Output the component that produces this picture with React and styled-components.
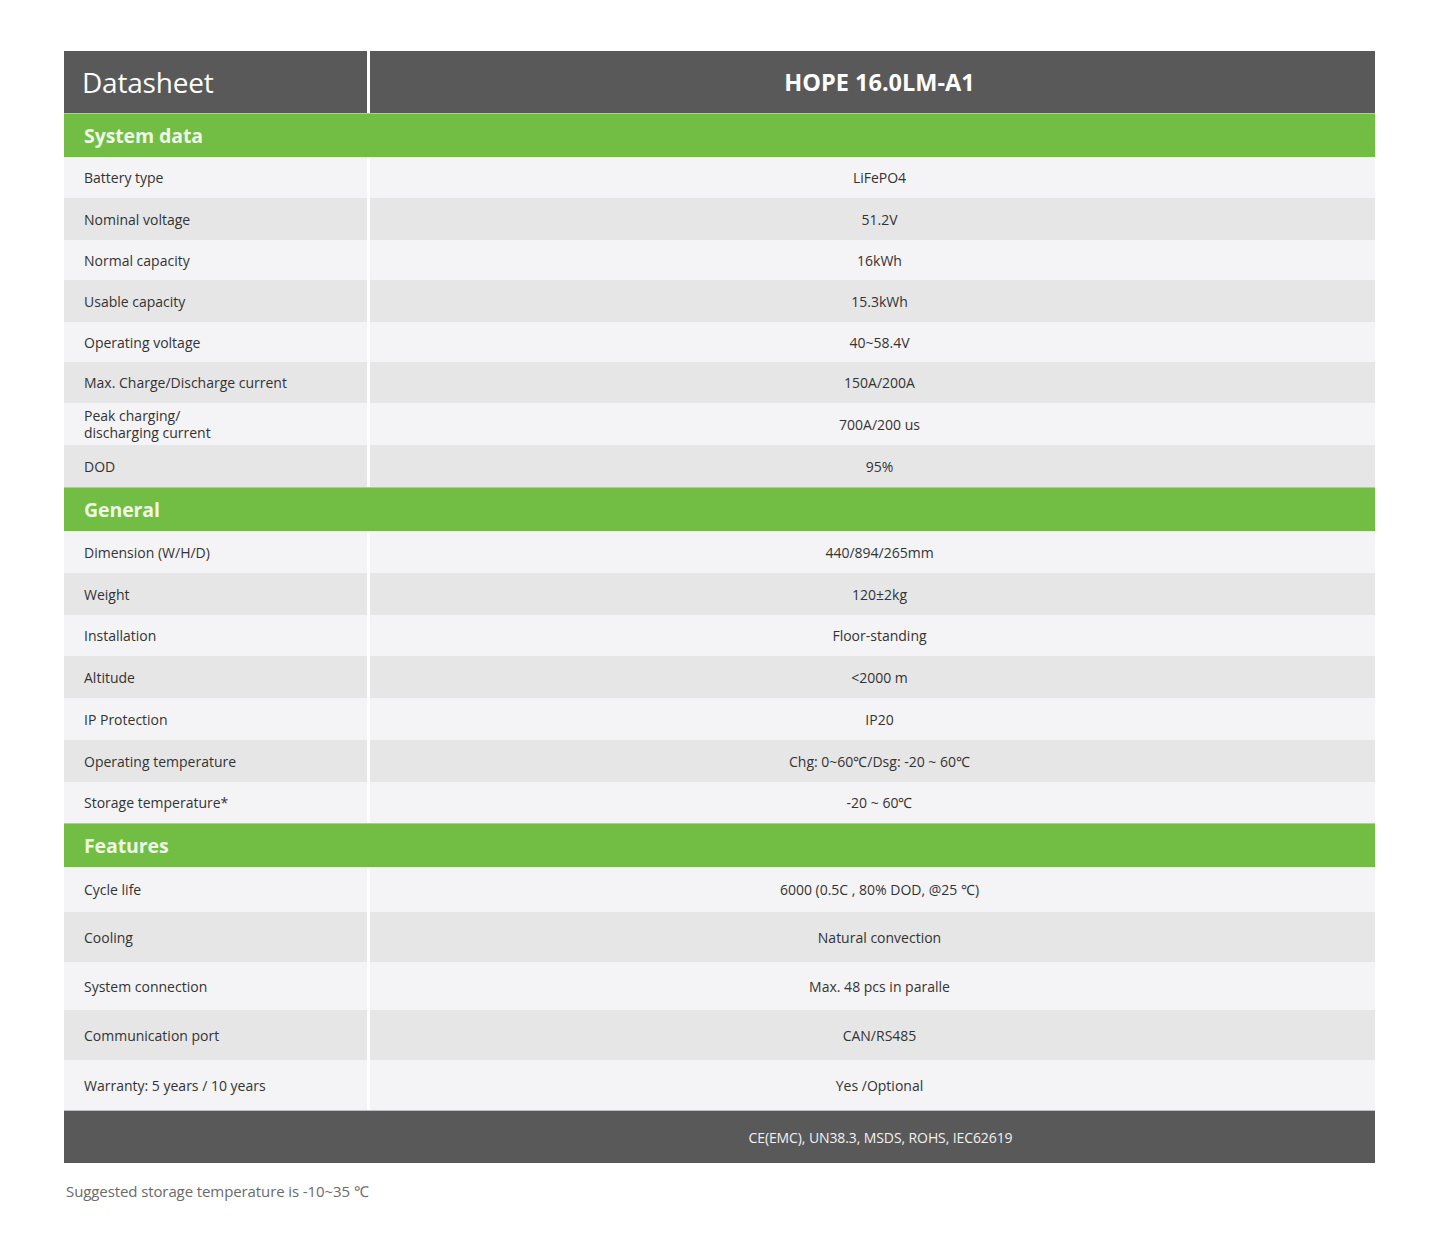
import React from "react";
import styled, { createGlobalStyle } from "styled-components";

const Global = createGlobalStyle`
  html, body { margin: 0; padding: 0; background: #ffffff; }
  body { font-family: "Open Sans", "Liberation Sans", sans-serif; color: #333; }
`;

const Page = styled.div`
  padding: 51px 0 40px 64px;
  width: 1311px;
`;

const Table = styled.div`
  display: flex;
  flex-direction: column;
  width: 1311px;
`;

const HeadRow = styled.div`
  display: grid;
  grid-template-columns: 303px 1005px;
  column-gap: 3px;
  background: #ffffff;
  height: 62px;
`;

const HeadCell = styled.div`
  background: #595959;
  color: #ffffff;
  display: flex;
  align-items: center;
  justify-content: ${(p) => (p.$center ? "center" : "flex-start")};
  padding: ${(p) => (p.$center ? "0 0 0 14px" : "0 0 0 18px")};
  font-size: ${(p) => (p.$center ? "23.5px" : "28px")};
  font-weight: ${(p) => (p.$center ? 700 : 400)};
  letter-spacing: ${(p) => (p.$center ? "0px" : "-0.2px")};
`;

const SectionBar = styled.div`
  box-sizing: border-box;
  background: #72bd43;
  height: 44px;
  display: flex;
  align-items: center;
  padding-left: 20px;
  font-size: 19.5px;
  font-weight: 700;
  color: #eef8e4;
  letter-spacing: -0.1px;
  border-top: 1px solid #9fd87e;
`;

const Row = styled.div`
  display: grid;
  grid-template-columns: 303px 1005px;
  column-gap: 3px;
  background: #ffffff;
  height: ${(p) => p.$h}px;
`;

const Cell = styled.div`
  background: ${(p) => (p.$dark ? "#e6e6e6" : "#f4f3f5")};
  display: flex;
  align-items: center;
  font-size: 14px;
  letter-spacing: 0px;
  line-height: 17px;
  color: #333333;
`;

const Label = styled(Cell)`
  padding-left: 20px;
`;

const Value = styled(Cell)`
  justify-content: center;
  padding-left: 14px;
`;

const Footer = styled.div`
  box-sizing: border-box;
  background: #595959;
  height: 53px;
  display: flex;
  align-items: center;
  justify-content: center;
  padding-left: 322px;
  color: #f2f2f2;
  font-size: 14px;
  letter-spacing: -0.1px;
  border-top: 1px solid #bdbdbd;
`;

const Note = styled.div`
  margin-top: 18px;
  padding-left: 2px;
  color: #6a6a6a;
  font-size: 15px;
  letter-spacing: -0.1px;
`;

const sections = [
  {
    title: "System data",
    h: [41, 42, 40, 42, 40, 41, 42, 42],
    rows: [
      ["Battery type", "LiFePO4"],
      ["Nominal voltage", "51.2V"],
      ["Normal capacity", "16kWh"],
      ["Usable capacity", "15.3kWh"],
      ["Operating voltage", "40~58.4V"],
      ["Max. Charge/Discharge current", "150A/200A"],
      [
        <>
          Peak charging/
          <br />
          discharging current
        </>,
        "700A/200 us",
      ],
      ["DOD", "95%"],
    ],
  },
  {
    title: "General",
    h: [42, 42, 41, 42, 42, 42, 41],
    rows: [
      ["Dimension (W/H/D)", "440/894/265mm"],
      ["Weight", "120±2kg"],
      ["Installation", "Floor-standing"],
      ["Altitude", "<2000 m"],
      ["IP Protection", "IP20"],
      ["Operating temperature", "Chg: 0~60℃/Dsg: -20 ~ 60℃"],
      ["Storage temperature*", "-20 ~ 60℃"],
    ],
  },
  {
    title: "Features",
    h: [45, 50, 48, 50, 50],
    rows: [
      ["Cycle life", "6000 (0.5C , 80% DOD,  @25 ℃)"],
      ["Cooling", "Natural convection"],
      ["System connection", "Max. 48 pcs in paralle"],
      ["Communication port", "CAN/RS485"],
      ["Warranty: 5 years / 10 years", "Yes /Optional"],
    ],
  },
];

export default function App() {
  return (
    <>
      <Global />
      <Page>
        <Table>
          <HeadRow>
            <HeadCell>Datasheet</HeadCell>
            <HeadCell $center>HOPE 16.0LM-A1</HeadCell>
          </HeadRow>
          {sections.map((s) => (
            <React.Fragment key={s.title}>
              <SectionBar>{s.title}</SectionBar>
              {s.rows.map(([label, value], i) => (
                <Row key={i} $h={s.h[i]}>
                  <Label $dark={i % 2 === 1}>{label}</Label>
                  <Value $dark={i % 2 === 1}>{value}</Value>
                </Row>
              ))}
            </React.Fragment>
          ))}
          <Footer>CE(EMC), UN38.3, MSDS, ROHS, IEC62619</Footer>
        </Table>
        <Note>Suggested storage temperature is -10~35 ℃</Note>
      </Page>
    </>
  );
}
